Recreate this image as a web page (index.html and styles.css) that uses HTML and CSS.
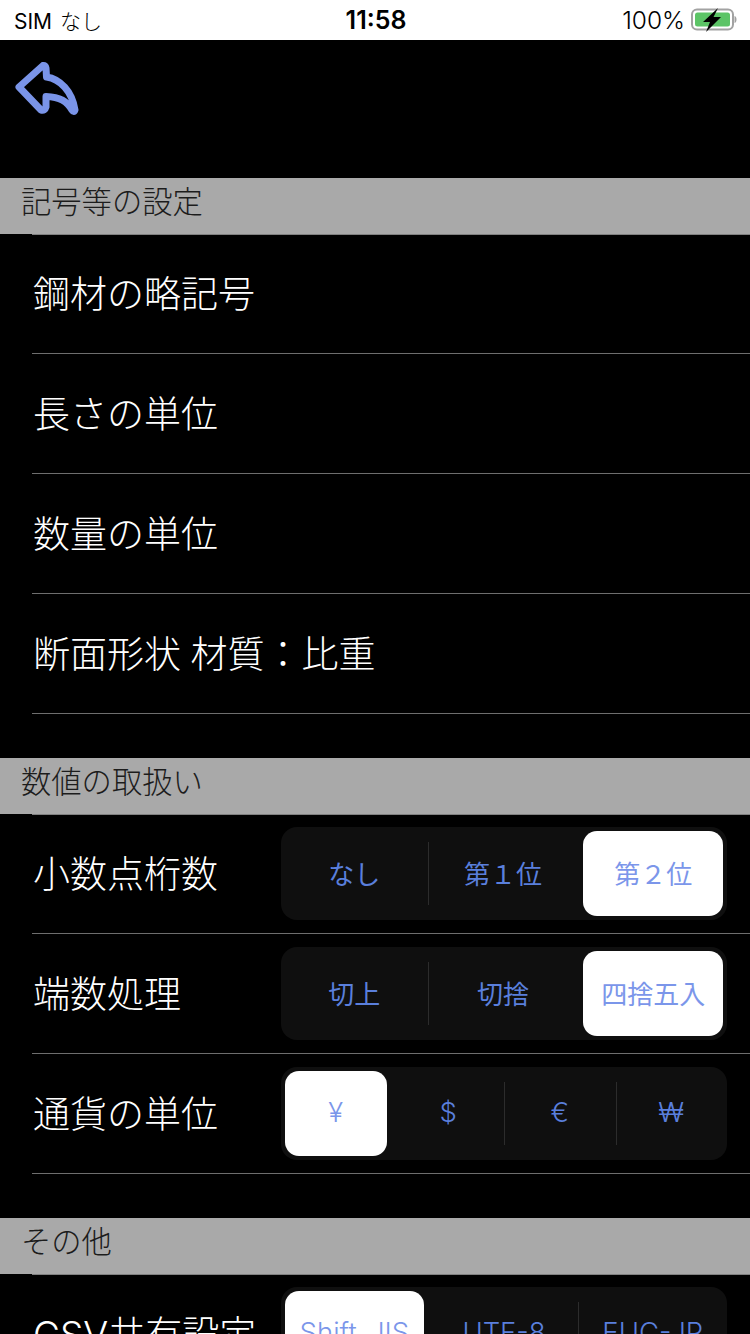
FILE: index.html
```html
<!DOCTYPE html>
<html lang="ja">
<head>
  <meta charset="UTF-8">
  <meta name="viewport" content="width=device-width, initial-scale=1.0">
  <title>設定</title>
  <link rel="stylesheet" href="styles.css">
</head>
<body>
<!-- Status bar -->
<div class="status-bar">
  <div class="status-left">SIM<span class="status-sim">なし</span></div>
  <div class="status-time">11:58</div>
  <div class="status-right">
    <span>100%</span>
    <svg class="battery" width="47" height="24" viewBox="0 0 47 24" aria-hidden="true">
      <rect x="1" y="1.500" width="41" height="20" rx="5" fill="none" stroke="#a2a2a2" stroke-width="2"/>
      <rect x="4" y="4.500" width="35" height="14" rx="2.500" fill="#5cc466"/>
      <path d="M43.500 8c1.600.5 2 2 2 3.500s-.4 3-2 3.500z" fill="#a2a2a2"/>
      <path d="M27 0L12 14h7l-4 10L30 9h-7.500z" fill="#000"/>
    </svg>
  </div>
</div>

<!-- Back button -->
<div class="nav-bar">
  <svg class="back-icon" width="66" height="60" viewBox="0 0 66 60" aria-label="戻る">
    <path d="M5 27L29 5.500Q31.500 5 32 8L32.500 17C46 19 58 31 61 50Q60 53 58 50C53 41 46 37 32 36.500L32 47Q31 51 27 50Z" fill="none" stroke="#7a94e8" stroke-width="7" stroke-linejoin="round"/>
  </svg>
</div>

<!-- Symbols -->
<div class="section-header">記号等の設定</div>
<div class="section-list">
  <div class="row"><span class="row-label">鋼材の略記号</span></div>
  <div class="row"><span class="row-label">長さの単位</span></div>
  <div class="row"><span class="row-label">数量の単位</span></div>
  <div class="row"><span class="row-label">断面形状 材質：比重</span></div>
</div>

<!-- Numbers -->
<div class="section-header">数値の取扱い</div>
<div class="section-list">
  <div class="row">
    <span class="row-label">小数点桁数</span>
    <div class="segmented">
      <div class="segment">なし</div>
      <div class="segment divided">第１位</div>
      <div class="segment selected">第２位</div>
    </div>
  </div>
  <div class="row">
    <span class="row-label">端数処理</span>
    <div class="segmented">
      <div class="segment">切上</div>
      <div class="segment divided">切捨</div>
      <div class="segment selected">四捨五入</div>
    </div>
  </div>
  <div class="row">
    <span class="row-label">通貨の単位</span>
    <div class="segmented segmented-latin">
      <div class="segment selected">¥</div>
      <div class="segment">$</div>
      <div class="segment divided">€</div>
      <div class="segment divided">₩</div>
    </div>
  </div>
</div>

<!-- Other -->
<div class="section-header">その他</div>
<div class="section-list">
  <div class="row">
    <span class="row-label">CSV共有設定</span>
    <div class="segmented segmented-latin">
      <div class="segment selected">Shift_JIS</div>
      <div class="segment">UTF-8</div>
      <div class="segment divided">EUC-JP</div>
    </div>
  </div>
</div>
</body>
</html>
```

FILE: styles.css
```css
html, body {
  height: 1334px;
  overflow: hidden;
}
body {
  font-family: Inter, "Noto Sans CJK JP", sans-serif;
  margin: 0;
  background-color: #000;
  color: #fff;
}
.status-bar {
  display: grid;
  grid-template-columns: 1fr auto 1fr;
  align-items: center;
  height: 40px;
  padding: 0 12px 0 14px;
  box-sizing: border-box;
  background-color: #fff;
  color: #000;
  font-size: 24.500px;
  font-weight: 300;
}
.status-left {
  font-size: 21px;
  font-weight: 400;
}
.status-sim {
  margin-left: 8px;
  font-weight: 300;
}
.status-time {
  font-size: 25px;
  font-weight: 600;
}
.status-right {
  display: flex;
  justify-content: flex-end;
  align-items: center;
  gap: 6px;
}
.nav-bar {
  height: 138px;
  padding: 20px 0 0 14px;
  box-sizing: border-box;
}
.back-icon {
  display: block;
}
.section-header {
  position: relative;
  height: 56px;
  padding-left: 21px;
  background-color: #a9a9a9;
  color: #1c1c1c;
  font-size: 30.300px;
  font-weight: 300;
  line-height: 49px;
}
.section-header::after {
  content: "";
  position: absolute;
  left: 32px;
  right: 0;
  bottom: -1px;
  height: 1px;
  background-color: #808080;
}
.section-list {
  padding-bottom: 44px;
}
.row {
  display: flex;
  align-items: center;
  justify-content: space-between;
  height: 120px;
  box-sizing: border-box;
  margin-left: 32px;
  padding-right: 23px;
  border-bottom: 1px solid #6e6e6e;
}
.row-label {
  margin: -4px 0 0 1px;
  font-size: 37px;
  font-weight: 300;
  word-spacing: -1px;
  white-space: nowrap;
}
.segmented {
  display: grid;
  grid-auto-flow: column;
  grid-auto-columns: 1fr;
  width: 446px;
  height: 93px;
  border-radius: 16px;
  background-color: #0f0f0f;
}
.segment {
  position: relative;
  display: flex;
  align-items: center;
  justify-content: center;
  padding-bottom: 3px;
  color: #5a7fdc;
  font-size: 26px;
  font-weight: 400;
  white-space: nowrap;
}
.segmented-latin .segment {
  font-size: 27.500px;
  font-weight: 300;
}
.segment.divided::before {
  content: "";
  position: absolute;
  left: 0;
  top: 15px;
  bottom: 15px;
  width: 1px;
  background-color: #2c2c2c;
}
.segment.divided:nth-child(2)::before {
  left: -2px;
}
.segment:first-child:not(.selected),
.segment.divided:nth-child(2) {
  padding-right: 2px;
}
.segment.selected {
  margin: 4px;
  border-radius: 14px;
  background-color: #fff;
  color: #7b96ea;
}
.segment.selected:first-child {
  margin-right: 6px;
}
.segment.selected:last-child {
  margin-left: 5px;
}
```
